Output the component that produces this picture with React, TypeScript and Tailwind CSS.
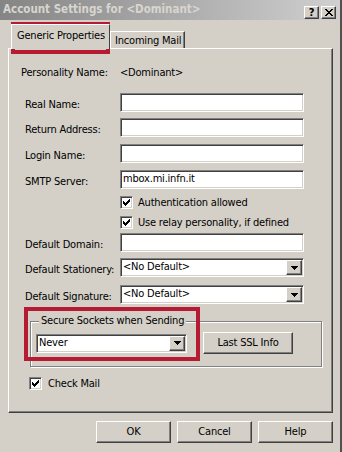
import React from "react";

const sunken =
  "border border-t-[#808080] border-l-[#808080] border-b-white border-r-white shadow-[inset_1px_1px_0_#404040,inset_-1px_-1px_0_#d4d0c8]";
const raised =
  "border border-t-white border-l-white border-b-[#404040] border-r-[#404040] shadow-[inset_-1px_-1px_0_#808080]";

function Check() {
  return (
    <div className={`w-[13px] h-[13px] shrink-0 bg-white flex items-center justify-center ${sunken}`}>
      <svg width="7" height="7" viewBox="0 0 7 7" shapeRendering="crispEdges">
        <path
          d="M0 2h1v3h-1zM1 3h1v3h-1zM2 4h1v3h-1zM3 3h1v3h-1zM4 2h1v3h-1zM5 1h1v3h-1zM6 0h1v3h-1z"
          fill="#000"
        />
      </svg>
    </div>
  );
}

function Arrow() {
  return (
    <div className={`w-[16px] h-[15px] shrink-0 bg-[#d4d0c8] flex items-center justify-center ${raised}`}>
      <svg width="7" height="4" viewBox="0 0 7 4" shapeRendering="crispEdges">
        <path d="M0 0h7v1h-7zM1 1h5v1h-5zM2 2h3v1h-3zM3 3h1v1h-1z" fill="#000" />
      </svg>
    </div>
  );
}

function Row({ label, mt, children }: { label: string; mt: string; children: React.ReactNode }) {
  return (
    <div className={`flex items-center h-[19px] ${mt}`}>
      <span className="w-[111px] pl-[16px] mt-[5px] leading-[14px] whitespace-nowrap">{label}</span>
      {children}
    </div>
  );
}

function TextBox({ value = "" }: { value?: string }) {
  return (
    <div className={`w-[184px] h-[19px] bg-white flex items-center pl-[2px] ${sunken}`}>{value}</div>
  );
}

function Select({ value, w }: { value: string; w: string }) {
  return (
    <div className={`${w} h-[19px] bg-white flex items-center justify-between pl-[2px] pr-px ${sunken}`}>
      <span className="whitespace-nowrap">{value}</span>
      <Arrow />
    </div>
  );
}

function CheckRow({ label, mt }: { label: string; mt: string }) {
  return (
    <div className={`flex items-center h-[13px] pl-[111px] gap-[5px] ${mt}`}>
      <Check />
      <span className="leading-[14px] whitespace-nowrap">{label}</span>
    </div>
  );
}

function Button({ label, w, h }: { label: string; w: string; h: string }) {
  return (
    <div className={`${w} ${h} bg-[#d4d0c8] flex items-center justify-center whitespace-nowrap ${raised}`}>{label}</div>
  );
}

export default function App() {
  return (
    <div className="w-[342px] h-[452px] bg-[#d4d0c8] relative overflow-hidden font-['DejaVu_Sans_Condensed','Liberation_Sans',Arial,sans-serif] text-[11px] tracking-[-0.2px] text-black border-r-2 border-r-[#505050]">
      {/* title bar */}
      <div className="h-[20px] bg-gradient-to-r from-[#858585] to-[#d0d0d0] flex items-center justify-between pl-[3px] pr-[4px]">
        <span className="font-bold text-[11.5px] tracking-[0px] text-[#d8d5d0] whitespace-nowrap">
          Account Settings for &lt;Dominant&gt;
        </span>
        <div className="flex gap-[2px] pt-[5px]">
          <div className={`w-[15px] h-[13px] bg-[#d4d0c8] flex items-center justify-center font-bold text-[11px] leading-none ${raised}`}>
            ?
          </div>
          <div className={`w-[15px] h-[13px] bg-[#d4d0c8] flex items-center justify-center ${raised}`}>
            <svg width="8" height="7" viewBox="0 0 8 7" shapeRendering="crispEdges">
              <path
                d="M0 0h2v1h-2zM6 0h2v1h-2zM1 1h2v1h-2zM5 1h2v1h-2zM2 2h4v1h-4zM3 3h2v1h-2zM2 4h4v1h-4zM1 5h2v1h-2zM5 5h2v1h-2zM0 6h2v1h-2zM6 6h2v1h-2z"
                fill="#000"
              />
            </svg>
          </div>
        </div>
      </div>

      {/* tabs */}
      <div className="h-[28px] flex items-end pl-[11px]">
        <div className="relative z-10 -mb-[1px] w-[99px] h-[25px] bg-[#d4d0c8] border-t border-l border-t-white border-l-white border-r border-r-[#404040] flex items-center pl-[5px] pb-[2px] whitespace-nowrap">
          Generic Properties
        </div>
        <div className="w-[75px] h-[17px] border-t border-l border-t-white border-l-white border-r border-r-[#404040] shadow-[inset_-1px_0_0_#808080] flex items-center pl-[4px] pt-[2px] whitespace-nowrap">
          Incoming Mail
        </div>
      </div>

      {/* panel */}
      <div className={`ml-[8px] w-[325px] h-[365px] flex flex-col ${raised}`}>
        <div className="flex items-center h-[16px] mt-[16px]">
          <span className="w-[111px] pl-[12px] whitespace-nowrap">Personality Name:</span>
          <span>&lt;Dominant&gt;</span>
        </div>
        <Row label="Real Name:" mt="mt-[12px]">
          <TextBox />
        </Row>
        <Row label="Return Address:" mt="mt-[6px]">
          <TextBox />
        </Row>
        <Row label="Login Name:" mt="mt-[7px]">
          <TextBox />
        </Row>
        <Row label="SMTP Server:" mt="mt-[7px]">
          <TextBox value="mbox.mi.infn.it" />
        </Row>
        <CheckRow label="Authentication allowed" mt="mt-[7px]" />
        <CheckRow label="Use relay personality, if defined" mt="mt-[7px]" />
        <Row label="Default Domain:" mt="mt-[4px]">
          <TextBox />
        </Row>
        <Row label="Default Stationery:" mt="mt-[6px]">
          <Select value="<No Default>" w="w-[184px]" />
        </Row>
        <Row label="Default Signature:" mt="mt-[8px]">
          <Select value="<No Default>" w="w-[184px]" />
        </Row>

        <fieldset className="mt-[10px] ml-[21px] w-[292px] border border-[#808080] shadow-[inset_1px_1px_0_#ffffff,1px_1px_0_#ffffff] pl-[5px] pb-[12px]">
          <legend className="ml-[3px] px-[2px] bg-[#d4d0c8] leading-[14px] whitespace-nowrap">Secure Sockets when Sending</legend>
          <div className="flex items-center gap-[16px] mt-[4px]">
            <Select value="Never" w="w-[151px]" />
            <Button label="Last SSL Info" w="w-[90px]" h="h-[22px]" />
          </div>
        </fieldset>

        <div className="flex items-center gap-[6px] h-[13px] mt-[10px] ml-[20px]">
          <Check />
          <span className="leading-[14px]">Check Mail</span>
        </div>
      </div>

      {/* buttons */}
      <div className="flex justify-end gap-[6px] mt-[8px] pr-[7px]">
        <Button label="OK" w="w-[75px]" h="h-[22px]" />
        <Button label="Cancel" w="w-[75px]" h="h-[22px]" />
        <Button label="Help" w="w-[75px]" h="h-[22px]" />
      </div>

      {/* annotation boxes */}
      <div className="absolute left-[11px] top-[22px] w-[99px] h-[32px] border-[4px] border-[#b51c34]" />
      <div className="absolute left-[24px] top-[307px] w-[176px] h-[54px] border-[4px] border-[#b51c34]" />
    </div>
  );
}
